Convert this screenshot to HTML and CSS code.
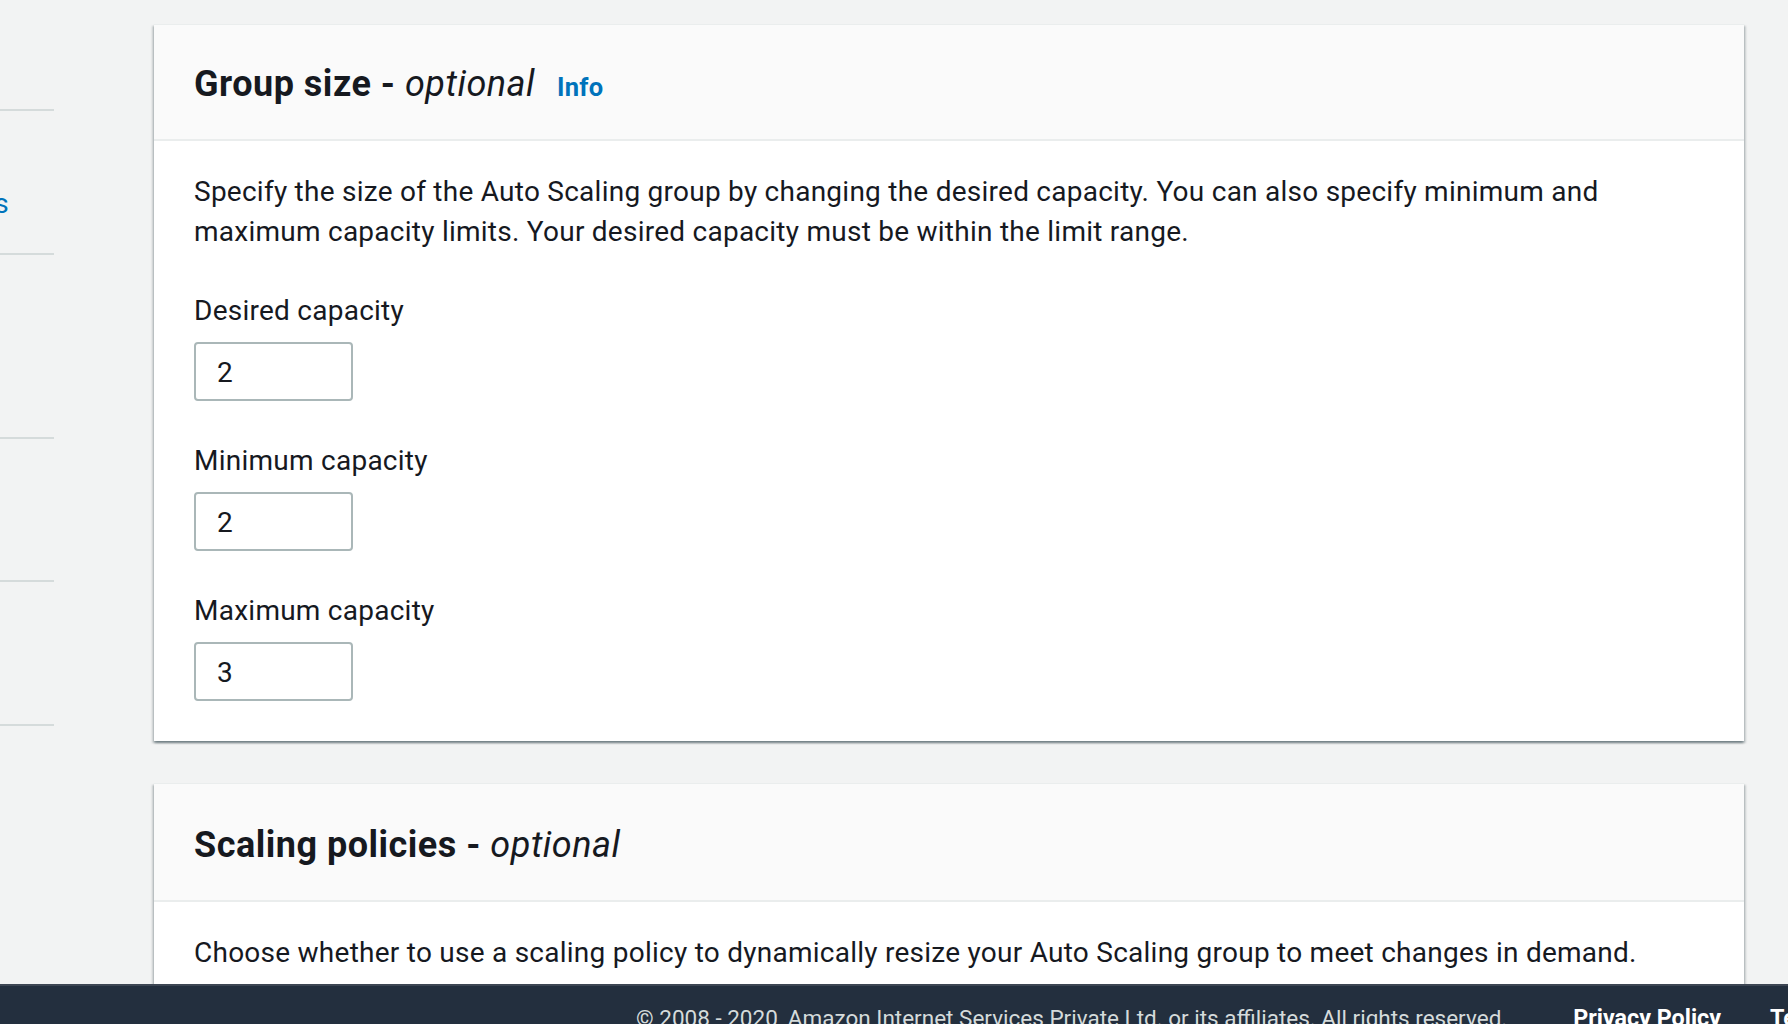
FILE: index.html
```html
<!DOCTYPE html>
<html lang="en">
<head>
<meta charset="utf-8">
<title>Group size</title>
<link rel="stylesheet" href="styles.css">
</head>
<body>
<div class="page">
  <div class="main">
    <nav class="steps">
      <div class="step step-1"><span class="step-label">Step 1</span></div>
      <div class="step step-2"><span class="step-label">Step 2</span><a class="step-link" href="#">Configure settings</a></div>
      <div class="step step-3"><span class="step-label">Step 3</span></div>
      <div class="step step-4"><span class="step-label">Step 4</span></div>
      <div class="step step-5"><span class="step-label">Step 5</span></div>
    </nav>
    <div class="content">
      <section class="card">
        <header class="card-header">
          <h2 class="card-title">Group size - <em>optional</em></h2>
          <a class="info" href="#">Info</a>
        </header>
        <div class="card-body">
          <p class="desc">Specify the size of the Auto Scaling group by changing the desired capacity. You can also specify minimum and maximum capacity limits. Your desired capacity must be within the limit range.</p>
          <div class="fields">
            <div class="field">
              <label class="field-label">Desired capacity</label>
              <div class="input">2</div>
            </div>
            <div class="field">
              <label class="field-label">Minimum capacity</label>
              <div class="input">2</div>
            </div>
            <div class="field">
              <label class="field-label">Maximum capacity</label>
              <div class="input">3</div>
            </div>
          </div>
        </div>
      </section>
      <section class="card">
        <header class="card-header card-header-2">
          <h2 class="card-title">Scaling policies - <em>optional</em></h2>
        </header>
        <div class="card-body card-body-2">
          <p class="desc">Choose whether to use a scaling policy to dynamically resize your Auto Scaling group to meet changes in demand.</p>
        </div>
      </section>
    </div>
  </div>
  <footer class="footer">
    <span class="copy">© 2008 - 2020, Amazon Internet Services Private Ltd. or its affiliates. All rights reserved.</span>
    <a class="foot-link" href="#">Privacy Policy</a>
    <a class="foot-link" href="#">Terms of Use</a>
  </footer>
</div>
</body>
</html>
```
FILE: styles.css
```css
* { box-sizing: border-box; }
html, body { margin: 0; padding: 0; }
body {
  background: #f2f3f3;
  font-family: Roboto, "Liberation Sans", sans-serif;
  color: #16191f;
  font-size: 28px;
  line-height: 40px;
  letter-spacing: 0.25px;
}
.page {
  height: 100vh;
  display: flex;
  flex-direction: column;
  overflow: hidden;
}
.main {
  flex: 1;
  min-height: 0;
  display: flex;
  overflow: hidden;
}
.steps {
  flex: none;
  width: 300px;
  margin-left: -246px;
  display: flex;
  flex-direction: column;
}
.step {
  border-bottom: 2px solid #d5dbdb;
  padding: 33px 45px 0 20px;
  display: flex;
  flex-direction: column;
}
.step-1 { height: 111px; }
.step-2 { height: 144px; }
.step-3 { height: 184px; }
.step-4 { height: 143px; }
.step-5 { height: 144px; }
.step-label { color: #687078; font-size: 24px; line-height: 40px; }
.step-link {
  color: #0073bb;
  text-decoration: none;
  text-align: right;
  white-space: nowrap;
}
.content {
  flex: none;
  width: 1590px;
  margin-left: 100px;
  padding-top: 24px;
  display: flex;
  flex-direction: column;
  gap: 42px;
}
.card {
  background: #fff;
  border-top: 1px solid #eaeded;
  box-shadow: 0 2px 2px 0 rgba(0, 28, 36, 0.35), 2px 2px 2px 0 rgba(0, 28, 36, 0.15), -2px 2px 2px 0 rgba(0, 28, 36, 0.15);
}
.card-header {
  background: #fafafa;
  border-bottom: 2px solid #eaeded;
  padding: 37px 40px 32px;
  display: flex;
  align-items: baseline;
  gap: 22px;
}
.card-header-2 { padding: 39px 40px 33px; }
.card-title {
  margin: 0;
  font-size: 36px;
  line-height: 44px;
  font-weight: 700;
  letter-spacing: 0.5px;
}
.card-title em {
  font-weight: 400;
  font-style: italic;
}
.info {
  color: #0073bb;
  font-size: 25.5px;
  font-weight: 700;
  text-decoration: none;
}
.card-body {
  padding: 31px 40px 40px;
}
.card-body-2 { padding-top: 31px; }
.desc { margin: 0; }
.fields {
  margin-top: 39px;
  display: flex;
  flex-direction: column;
  gap: 40px;
}
.field {
  display: flex;
  flex-direction: column;
  align-items: flex-start;
  gap: 11px;
}
.field-label { display: block; }
.input {
  width: 159px;
  height: 59px;
  border: 2px solid #aab7b8;
  border-radius: 4px;
  background: #fff;
  padding: 3px 21px 0;
  line-height: 52px;
}
.footer {
  flex: none;
  height: 40px;
  background: #232f3e;
  border-top: 2px solid #3d4653;
  padding: 16px 0 0 636px;
  display: flex;
  white-space: nowrap;
  overflow: hidden;
  font-size: 22.5px;
  line-height: 32px;
  letter-spacing: 0;
}
.copy { color: #d5dbdb; margin-right: 66px; }
.foot-link {
  color: #fff;
  font-size: 23.3px;
  font-weight: 700;
  text-decoration: none;
  margin-right: 49px;
}
```
